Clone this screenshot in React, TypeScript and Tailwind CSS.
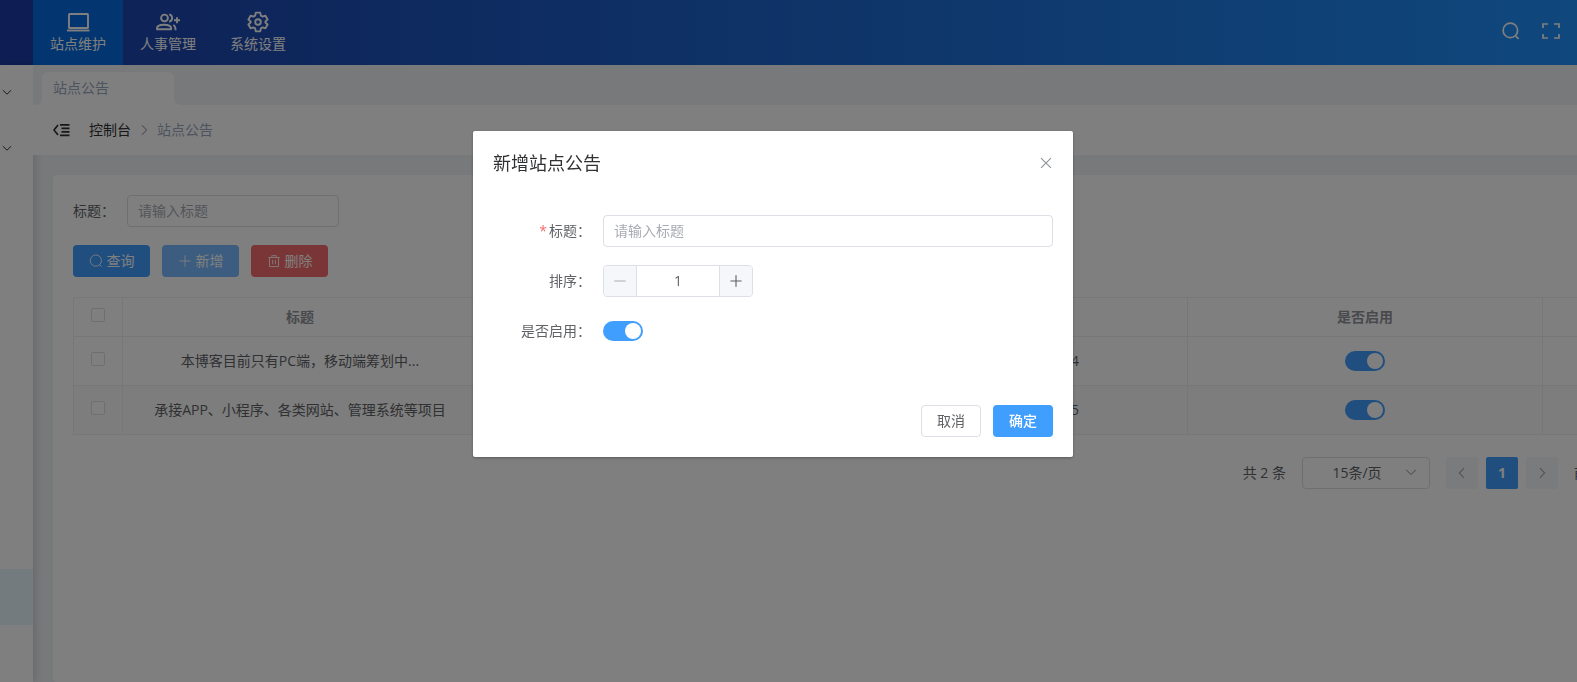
import React from 'react';

type IconProps = { d: string; size?: number; stroke?: number; className?: string };

function Icon({ d, size = 14, stroke = 64, className = '' }: IconProps) {
  return (
    <svg
      viewBox="0 0 1024 1024"
      width={size}
      height={size}
      className={`shrink-0 ${className}`}
      fill="none"
      stroke="currentColor"
      strokeWidth={stroke}
      aria-hidden="true"
    >
      <path d={d} />
    </svg>
  );
}

const SEARCH = 'M850 480a370 370 0 1 1-740 0a370 370 0 1 1 740 0M735 745L900 910';
const SEARCH_ROUND = 'M910 480a410 410 0 1 1-820 0a410 410 0 1 1 820 0M780 780L920 920';
const CHEVRON_DOWN = 'M160 360L512 700L864 360';
const CHEVRON_LEFT = 'M660 160L320 512L660 864';
const CHEVRON_RIGHT = 'M364 160L704 512L364 864';
const PLUS = 'M512 100V924M100 512H924';
const MINUS = 'M100 512H924';
const CLOSE = 'M150 150L874 874M874 150L150 874';
const TRASH = 'M90 260H934M350 260V120H674V260M180 260V920H844V260M410 430V750M614 430V750';

const navItems = [
  {
    label: '站点维护',
    active: true,
    drawing: (
      <>
        <rect x="3" y="4" width="19" height="14" rx="0.6" />
        <path d="M1 20.500H23.500" />
      </>
    ),
  },
  {
    label: '人事管理',
    active: false,
    drawing: (
      <>
        <circle cx="8.500" cy="8" r="3.400" />
        <path d="M1 19.300V18.400C1 16.200 4 14.800 8 14.800S15.200 16.200 15.200 18.400V19.300ZM13.200 4.300A3.800 3.800 0 0 1 13.200 11.700M17.300 15Q19.600 16 19.600 20.200M18 10.300H24M21 7.300V13.300" />
      </>
    ),
  },
  {
    label: '系统设置',
    active: false,
    drawing: (
      <>
        <circle cx="12" cy="12" r="2.800" />
        <path d="M9.800 2.600H14.200L14.900 5.700L16.500 6.600L19.400 5.700L21.600 9.500L19.400 11.500V12.500L21.600 14.500L19.400 18.300L16.500 17.400L14.900 18.300L14.200 21.400H9.800L9.100 18.300L7.500 17.400L4.600 18.300L2.400 14.500L4.600 12.500V11.500L2.400 9.500L4.600 5.700L7.500 6.600L9.100 5.700Z" />
      </>
    ),
  },
];

const rows = [
  { title: '本博客目前只有PC端，移动端筹划中...', sort: 1, time: '2021-12-08 16:21:34' },
  { title: '承接APP、小程序、各类网站、管理系统等项目', sort: 2, time: '2021-12-08 16:20:15' },
];

function Switch({ label, id }: { label: string; id?: string }) {
  return (
    <label className="relative inline-flex align-top">
      <input id={id} type="checkbox" role="switch" defaultChecked aria-label={label} className="peer sr-only" />
      <span className="flex h-5 w-10 justify-start rounded-full bg-[#dcdfe6] p-0.5 peer-checked:justify-end peer-checked:bg-[#409eff]">
        <span className="h-4 w-4 rounded-full bg-white" />
      </span>
    </label>
  );
}

function Check({ label }: { label: string }) {
  return (
    <input
      type="checkbox"
      aria-label={label}
      className="mx-auto mb-1 block h-3.5 w-3.5 appearance-none rounded-xs border border-[#dcdfe6] bg-white checked:bg-[#409eff]"
    />
  );
}

function Header() {
  return (
    <header className="flex h-[65px] shrink-0 items-stretch bg-linear-to-r from-[#1c3fa8] to-[#1e90fa] text-white">
      <div className="w-[33px] shrink-0 bg-[#1d3ca8]" />
      <nav className="flex">
        {navItems.map((n) => (
          <a
            key={n.label}
            href="#"
            className={`flex w-[90px] flex-col items-center pt-2.5 text-sm leading-5 ${n.active ? 'bg-[#066be0]' : ''}`}
          >
            <svg viewBox="0 0 24 24" className="h-6 w-6" fill="none" stroke="currentColor" strokeWidth="1.9" strokeLinejoin="round" aria-hidden="true">
              {n.drawing}
            </svg>
            {n.label}
          </a>
        ))}
      </nav>
      <div className="ml-auto flex items-center gap-5 pr-4 pb-1">
        <button type="button" aria-label="搜索">
          <Icon d={SEARCH} size={20} stroke={88} />
        </button>
        <button type="button" aria-label="全屏">
          <svg viewBox="0 0 20 20" className="h-5 w-5" fill="none" stroke="currentColor" strokeWidth="1.7" aria-hidden="true">
            <path d="M2 7V3H7M13 3H18V7M18 13V17H13M7 17H2V13" />
          </svg>
        </button>
      </div>
    </header>
  );
}

function Sidebar() {
  return (
    <aside className="z-1 w-[33px] shrink-0 bg-white text-[#303133] shadow-[2px_0_8px_rgba(0,0,0,0.15)]">
      <button type="button" aria-label="展开菜单" className="flex h-14 w-full items-center pb-0.5 pl-px">
        <Icon d={CHEVRON_DOWN} size={12} stroke={84} />
      </button>
      <button type="button" aria-label="展开菜单" className="flex h-14 w-full items-center pb-0.5 pl-px">
        <Icon d={CHEVRON_DOWN} size={12} stroke={84} />
      </button>
      <div className="h-[392px]" />
      <div className="h-14 bg-[#e9f6ff]" />
    </aside>
  );
}

function TabBar() {
  return (
    <div className="flex h-10 items-end bg-[#f0f2f5] pl-px">
      <svg viewBox="0 0 8 8" className="h-2 w-2 fill-white" aria-hidden="true">
        <path d="M8 0V8H0Q8 8 8 0Z" />
      </svg>
      <a href="#" className="flex h-[33px] w-[132px] items-center rounded-t-md bg-white px-[11px] pb-0.5 text-[#97a8be]">
        站点公告
      </a>
      <svg viewBox="0 0 8 8" className="h-2 w-2 fill-white" aria-hidden="true">
        <path d="M0 0V8H8Q0 8 0 0Z" />
      </svg>
    </div>
  );
}

function Breadcrumb() {
  return (
    <nav className="flex h-[50px] items-center bg-white pl-5">
      <button type="button" aria-label="收起菜单" className="mr-[19px] text-[#303133]">
        <svg viewBox="0 0 17 14" width="17" height="14" fill="none" stroke="currentColor" strokeWidth="1.700" aria-hidden="true">
          <path d="M5 2L1 7L5 12M7 1.800H16.500M8.500 5.300H16.500M8.500 8.800H16.500M7 12.300H16.500" />
        </svg>
      </button>
      <a href="#" className="text-[#303133]">控制台</a>
      <Icon d={CHEVRON_RIGHT} size={14} stroke={80} className="mx-1.5 text-[#a8abb2]" />
      <span className="text-[#97a8be]">站点公告</span>
    </nav>
  );
}

function ActionButton({ label, icon, color }: { label: string; icon: string; color: string }) {
  return (
    <button type="button" className={`flex h-8 w-[77px] items-center justify-center gap-1 rounded-sm text-white ${color}`}>
      <Icon d={icon} />
      {label}
    </button>
  );
}

function NoticeTable() {
  const cell = 'border-r border-b border-[#ebeef5] text-center';
  return (
    <table className="mt-5 w-full table-fixed border-separate border-spacing-0 border-t border-l border-[#ebeef5]">
      <colgroup>
        <col className="w-[49px]" />
        <col />
        <col />
        <col />
        <col />
        <col className="w-[145px]" />
      </colgroup>
      <thead>
        <tr className="h-[39px] text-[#909399]">
          <th className={cell}><Check label="全选" /></th>
          <th className={cell}>标题</th>
          <th className={cell}>排序</th>
          <th className={cell}>创建时间</th>
          <th className={cell}>是否启用</th>
          <th className={cell}>操作</th>
        </tr>
      </thead>
      <tbody>
        {rows.map((r) => (
          <tr key={r.title} className="h-[49px] even:bg-[#fafafa]">
            <td className={cell}><Check label={r.title} /></td>
            <td className={cell}>{r.title}</td>
            <td className={cell}>{r.sort}</td>
            <td className={`${cell} pl-1.5`}>{r.time}</td>
            <td className={cell}><Switch label={`是否启用 ${r.title}`} /></td>
            <td className={cell}>编辑</td>
          </tr>
        ))}
      </tbody>
    </table>
  );
}

function Pagination() {
  const pager = 'flex h-8 w-8 items-center justify-center rounded-xs';
  return (
    <div className="mt-[22px] flex items-center justify-end">
      <span className="mr-4">共 2 条</span>
      <div className="relative mr-4">
        <select aria-label="每页条数" className="h-8 w-32 appearance-none rounded-sm border border-[#dcdfe6] bg-white pr-[18px] text-center">
          <option>15条/页</option>
        </select>
        <Icon d={CHEVRON_DOWN} stroke={80} className="pointer-events-none absolute top-2 right-3 text-[#a8abb2]" />
      </div>
      <div className="flex gap-2">
        <button type="button" aria-label="上一页" className={`${pager} bg-[#f5f7fa] text-[#a8abb2]`}>
          <Icon d={CHEVRON_LEFT} size={14} stroke={84} />
        </button>
        <button type="button" className={`${pager} bg-[#409eff] font-bold text-white`}>1</button>
        <button type="button" aria-label="下一页" className={`${pager} bg-[#f5f7fa] text-[#a8abb2]`}>
          <Icon d={CHEVRON_RIGHT} size={14} stroke={84} />
        </button>
      </div>
      <label className="ml-4 flex items-center gap-2">
        前往
        <input defaultValue="1" className="h-8 w-14 rounded-sm border border-[#dcdfe6] text-center" />
        页
      </label>
    </div>
  );
}

function Page() {
  return (
    <main className="-mr-[131px] ml-5 mt-5 flex-1 rounded-sm bg-white p-5">
      <div className="flex items-center">
        <label htmlFor="query-title" className="w-[54px]">标题：</label>
        <input
          id="query-title"
          placeholder="请输入标题"
          className="h-8 w-[212px] rounded-sm border border-[#dcdfe6] px-2.5 pb-0.5 placeholder:text-[#a8abb2]"
        />
      </div>
      <div className="mt-[18px] flex gap-3">
        <ActionButton label="查询" icon={SEARCH_ROUND} color="bg-[#409eff]" />
        <ActionButton label="新增" icon={PLUS} color="bg-[#79bbff]" />
        <ActionButton label="删除" icon={TRASH} color="bg-[#f56c6c]" />
      </div>
      <NoticeTable />
      <Pagination />
    </main>
  );
}

function Dialog() {
  const row = 'flex h-8 items-center';
  const label = 'w-[110px] shrink-0 pr-3 text-right';
  return (
    <div className="fixed inset-0 z-10 overflow-hidden bg-black/50 pt-[131px] pr-[31px]">
      <div
        role="dialog"
        aria-modal="true"
        aria-labelledby="dialog-title"
        className="mx-auto w-[600px] rounded-xs bg-white p-5 shadow-[0_1px_3px_rgba(0,0,0,0.3)]"
      >
        <div className="flex items-center justify-between">
          <h2 id="dialog-title" className="text-lg leading-6 text-[#303133]">新增站点公告</h2>
          <button type="button" aria-label="关闭" className="text-[#909399]">
            <Icon d={CLOSE} stroke={84} />
          </button>
        </div>
        <form className="mt-10 flex flex-col gap-[18px]">
          <div className={row}>
            <label htmlFor="title" className={label}>
              <span className="mr-0.5 text-[#f56c6c]">*</span>标题：
            </label>
            <input
              id="title"
              placeholder="请输入标题"
              className="h-8 min-w-0 flex-1 rounded-sm border border-[#dcdfe6] px-2.5 pb-0.5 placeholder:text-[#a8abb2]"
            />
          </div>
          <div className={row}>
            <label htmlFor="sort" className={label}>排序：</label>
            <div className="flex h-8 w-[150px] overflow-hidden rounded-sm border border-[#dcdfe6]">
              <button type="button" aria-label="减少" className="flex w-[33px] shrink-0 items-center justify-center border-r border-[#dcdfe6] bg-[#f5f7fa] text-[#a8abb2]">
                <Icon d={MINUS} stroke={72} />
              </button>
              <input id="sort" defaultValue="1" className="min-w-0 flex-1 text-center" />
              <button type="button" aria-label="增加" className="flex w-[33px] shrink-0 items-center justify-center border-l border-[#dcdfe6] bg-[#f5f7fa]">
                <Icon d={PLUS} stroke={84} />
              </button>
            </div>
          </div>
          <div className={row}>
            <label htmlFor="enabled" className={label}>是否启用：</label>
            <Switch id="enabled" label="是否启用" />
          </div>
          <div className="mt-10 flex justify-end gap-3">
            <button type="button" className="h-8 w-[60px] rounded-sm border border-[#dcdfe6] bg-white">取消</button>
            <button type="button" className="h-8 w-[60px] rounded-sm bg-[#409eff] font-medium text-white">确定</button>
          </div>
        </form>
      </div>
    </div>
  );
}

export default function App() {
  return (
    <div className="flex h-screen flex-col overflow-hidden bg-[#f0f2f5] font-['Open_Sans','Noto_Sans_CJK_SC',sans-serif] text-sm text-[#606266]">
      <Header />
      <div className="flex min-h-0 flex-1">
        <Sidebar />
        <div className="flex min-w-0 flex-1 flex-col">
          <div className="z-2">
            <TabBar />
            <Breadcrumb />
          </div>
          <Page />
        </div>
      </div>
      <Dialog />
    </div>
  );
}
